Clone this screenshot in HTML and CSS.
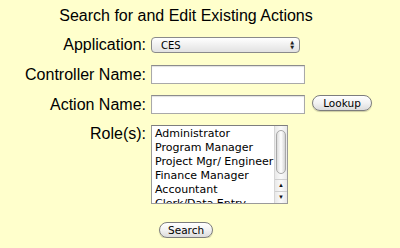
FILE: index.html
```html
<!DOCTYPE html>
<html lang="en">
<head>
  <meta charset="UTF-8" />
  <title>Search Actions</title>
  <link rel="stylesheet" href="styles.css">
</head>
<body>

  <div class="search-form">
    <div class="title">Search for and Edit Existing Actions</div>

    <div class="row">
      <label class="label">Application:</label>
      <div class="field">
        <div class="select">
          <span>CES</span>
          <span class="select-arrows">&#9650;<br>&#9660;</span>
        </div>
      </div>
    </div>

    <div class="row">
      <label class="label">Controller Name:</label>
      <div class="field"><div class="text-input"></div></div>
    </div>

    <div class="row">
      <label class="label">Action Name:</label>
      <div class="field">
        <div class="text-input"></div>
        <button class="pill-button lookup">Lookup</button>
      </div>
    </div>

    <div class="row roles-row">
      <label class="label">Role(s):</label>
      <div class="field">
        <div class="listbox">
          <div class="list-items">
            <div>Administrator</div>
            <div>Program Manager</div>
            <div>Project Mgr/ Engineer</div>
            <div>Finance Manager</div>
            <div>Accountant</div>
            <div>Clerk/Data Entry</div>
          </div>
          <div class="scrollbar">
            <div class="thumb"></div>
            <div class="scroll-arrows">
              <span>&#9650;</span>
              <span>&#9660;</span>
            </div>
          </div>
        </div>
      </div>
    </div>

    <div class="submit-row">
      <button class="pill-button search">Search</button>
    </div>
  </div>

</body>
</html>
```

FILE: styles.css
```css
* {
  margin: 0;
  padding: 0;
  box-sizing: border-box;
}

body {
  background-color: #ffffcc;
  color: #000;
  font-family: 'Liberation Sans', Arial, sans-serif;
  font-size: 16px;
}

.search-form {
  width: 372px;
  padding-top: 6px;
}

.title {
  text-align: center;
  line-height: 20px;
  margin-bottom: 10px;
}

.row {
  display: grid;
  grid-template-columns: 146px 1fr;
  column-gap: 5px;
  align-items: center;
  margin-bottom: 11px;
}

.label {
  text-align: right;
  line-height: 18px;
}

.field {
  display: flex;
  align-items: flex-start;
  gap: 7px;
}

.select {
  width: 149px;
  height: 16px;
  border: 1px solid #8a8a8a;
  border-radius: 4px;
  background: linear-gradient(#ffffff, #f0f0f0 50%, #e2e2e2);
  display: flex;
  align-items: center;
  justify-content: space-between;
  padding: 0 5px 0 9px;
  font-family: 'DejaVu Sans', sans-serif;
  font-size: 10px;
}

.select-arrows {
  font-size: 5px;
  line-height: 5px;
  text-align: center;
  color: #222;
}

.text-input {
  width: 154px;
  height: 19px;
  background: #fff;
  border: 1px solid #a9a9a9;
  border-top-color: #8c8c8c;
  box-shadow: inset 0 1px 1px rgba(0, 0, 0, 0.12);
}

.pill-button {
  height: 16px;
  border: 1px solid #7d7d7d;
  border-radius: 8px;
  background: linear-gradient(#ffffff, #f2f2f2 50%, #dcdcdc);
  font-family: 'DejaVu Sans', sans-serif;
  font-size: 10.5px;
  line-height: 14px;
  color: #000;
  padding: 0 8px;
  box-shadow: 0 1px 1px rgba(0, 0, 0, 0.2);
}

.lookup {
  width: 60px;
}

.roles-row {
  align-items: start;
  margin-bottom: 16px;
}

.listbox {
  width: 137px;
  height: 79px;
  background: #fff;
  border: 1px solid #9a9a9a;
  border-top-color: #7e7e7e;
  display: flex;
  overflow: hidden;
}

.list-items {
  flex: 1;
  padding: 1px 0 0 3px;
  font-family: 'DejaVu Sans', sans-serif;
  font-size: 11px;
  line-height: 14px;
  white-space: nowrap;
  overflow: hidden;
}

.scrollbar {
  width: 13px;
  border-left: 1px solid #d6d6d6;
  background: linear-gradient(90deg, #e9e9e9, #fafafa 50%, #e9e9e9);
  display: flex;
  flex-direction: column;
  align-items: center;
}

.thumb {
  width: 10px;
  height: 44px;
  margin-top: 4px;
  border: 1px solid #a8a8a8;
  border-radius: 5px;
  background: linear-gradient(90deg, #dcdcdc, #ffffff 50%, #d4d4d4);
}

.scroll-arrows {
  margin-top: auto;
  width: 100%;
  display: flex;
  flex-direction: column;
  align-items: center;
  font-size: 6px;
  line-height: 11px;
  color: #111;
  border-top: 1px solid #d0d0d0;
}

.scroll-arrows span + span {
  border-top: 1px solid #d0d0d0;
  width: 100%;
  text-align: center;
}

.submit-row {
  text-align: center;
}

.search {
  width: 54px;
}
```
